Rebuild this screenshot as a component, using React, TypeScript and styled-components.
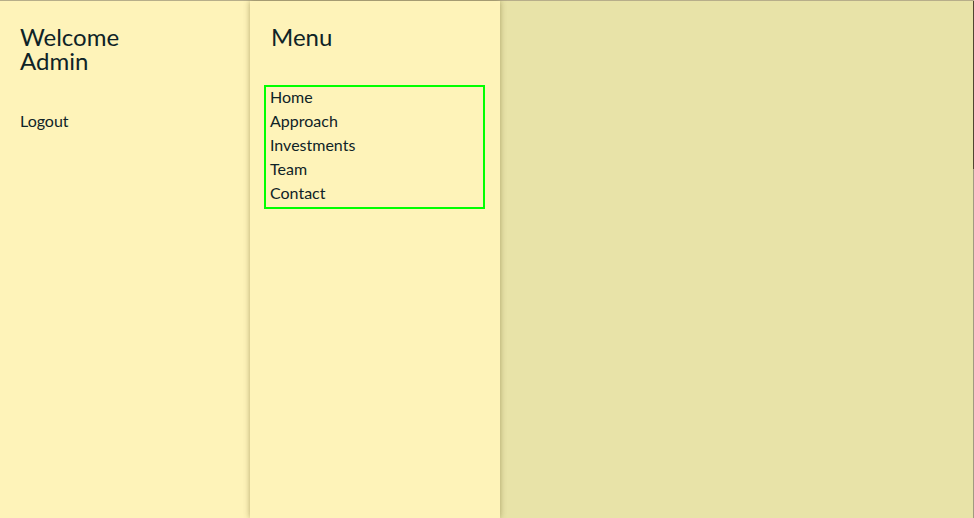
import React from "react";
import styled, { createGlobalStyle } from "styled-components";

const GlobalStyle = createGlobalStyle`
  html, body {
    margin: 0;
    padding: 0;
    height: 100%;
  }
  body {
    font-family: Lato, "Open Sans", sans-serif;
    color: #0f2327;
    background: #e8e3a8;
    overflow: hidden;
  }
  #root {
    height: 100%;
  }
`;

const Page = styled.div`
  display: flex;
  height: 518px;
  box-sizing: border-box;
  border-top: 1px solid #b7ae8a;
`;

const Panel = styled.aside<{ $raised?: boolean }>`
  flex: 0 0 250px;
  box-sizing: border-box;
  padding: 24px 20px 0 20px;
  background: #fef3b9;
  position: relative;
  z-index: ${(p) => (p.$raised ? 2 : 1)};
  box-shadow: ${(p) => (p.$raised ? "0 0 6px rgba(90, 80, 20, 0.45)" : "none")};
`;

const Main = styled.main`
  flex: 1;
  background: #e8e3a8;
  border-style: solid;
  border-width: 0 1px 0 0;
  border-image: linear-gradient(to bottom, #4f4630 0, #4f4630 168px, #a09a80 168px, #a09a80 100%) 1;
`;

const Heading = styled.h1<{ $indent?: number }>`
  margin: 0;
  font-size: 24px;
  font-weight: 400;
  line-height: 24px;
  padding-left: ${(p) => p.$indent ?? 0}px;
`;

const HeadingLine = styled.span`
  display: block;
`;

const Spacer = styled.div`
  height: 36px;
`;

const LinkText = styled.a`
  display: block;
  font-size: 16px;
  line-height: 24px;
  color: inherit;
  text-decoration: none;
`;

const NavBox = styled.nav`
  margin: 0 -5px 0 -6px;
  padding: 0 0 2px 4px;
  border: 2px solid #00ff00;
`;

const NavList = styled.div`
  margin-top: -2px;
`;

export default function App() {
  const items = ["Home", "Approach", "Investments", "Team", "Contact"];
  return (
    <>
      <GlobalStyle />
      <Page>
        <Panel>
          <Heading>
            <HeadingLine>Welcome</HeadingLine>
            <HeadingLine>Admin</HeadingLine>
          </Heading>
          <Spacer />
          <LinkText href="#">Logout</LinkText>
        </Panel>
        <Panel $raised>
          <Heading $indent={1}>Menu</Heading>
          <Spacer />
          <NavBox>
            <NavList>
              {items.map((i) => (
                <LinkText key={i} href="#">
                  {i}
                </LinkText>
              ))}
            </NavList>
          </NavBox>
        </Panel>
        <Main />
      </Page>
    </>
  );
}
